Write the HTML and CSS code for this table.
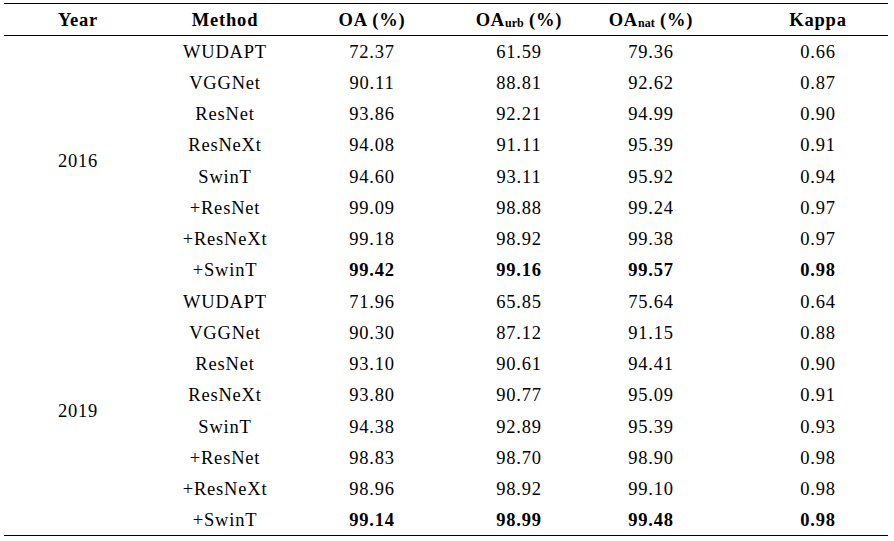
FILE: index.html
```html
<!DOCTYPE html>
<html>
<head>
<meta charset="utf-8">
<link rel="stylesheet" href="styles.css">
</head>
<body>
<table class="results">
  <colgroup>
    <col class="c-year"><col class="c-method"><col class="c-oa"><col class="c-urb"><col class="c-nat"><col class="c-kappa">
  </colgroup>
  <thead>
    <tr>
      <th>Year</th>
      <th>Method</th>
      <th>OA (%)</th>
      <th>OA<span class="sub">urb</span> (%)</th>
      <th>OA<span class="sub">nat</span> (%)</th>
      <th class="kappa">Kappa</th>
    </tr>
  </thead>
  <tbody>
    <tr><td rowspan="8">2016</td><td>WUDAPT</td><td>72.37</td><td>61.59</td><td>79.36</td><td class="kappa">0.66</td></tr>
    <tr><td>VGGNet</td><td>90.11</td><td>88.81</td><td>92.62</td><td class="kappa">0.87</td></tr>
    <tr><td>ResNet</td><td>93.86</td><td>92.21</td><td>94.99</td><td class="kappa">0.90</td></tr>
    <tr><td>ResNeXt</td><td>94.08</td><td>91.11</td><td>95.39</td><td class="kappa">0.91</td></tr>
    <tr><td>SwinT</td><td>94.60</td><td>93.11</td><td>95.92</td><td class="kappa">0.94</td></tr>
    <tr><td>+ResNet</td><td>99.09</td><td>98.88</td><td>99.24</td><td class="kappa">0.97</td></tr>
    <tr><td>+ResNeXt</td><td>99.18</td><td>98.92</td><td>99.38</td><td class="kappa">0.97</td></tr>
    <tr class="best"><td>+SwinT</td><td>99.42</td><td>99.16</td><td>99.57</td><td class="kappa">0.98</td></tr>
    <tr><td rowspan="8">2019</td><td>WUDAPT</td><td>71.96</td><td>65.85</td><td>75.64</td><td class="kappa">0.64</td></tr>
    <tr><td>VGGNet</td><td>90.30</td><td>87.12</td><td>91.15</td><td class="kappa">0.88</td></tr>
    <tr><td>ResNet</td><td>93.10</td><td>90.61</td><td>94.41</td><td class="kappa">0.90</td></tr>
    <tr><td>ResNeXt</td><td>93.80</td><td>90.77</td><td>95.09</td><td class="kappa">0.91</td></tr>
    <tr><td>SwinT</td><td>94.38</td><td>92.89</td><td>95.39</td><td class="kappa">0.93</td></tr>
    <tr><td>+ResNet</td><td>98.83</td><td>98.70</td><td>98.90</td><td class="kappa">0.98</td></tr>
    <tr><td>+ResNeXt</td><td>98.96</td><td>98.92</td><td>99.10</td><td class="kappa">0.98</td></tr>
    <tr class="best"><td>+SwinT</td><td>99.14</td><td>98.99</td><td>99.48</td><td class="kappa">0.98</td></tr>
  </tbody>
</table>
</body>
</html>
```
FILE: styles.css
```css
html, body {
  margin: 0;
  padding: 0;
  background: #ffffff;
}
body {
  padding: 3px 0 0 4px;
  font-family: "Liberation Serif", "Times New Roman", serif;
  color: #000000;
}
.results {
  width: 884px;
  border-collapse: collapse;
  table-layout: fixed;
  border-top: 1px solid #000;
  border-bottom: 1.5px solid #000;
  font-size: 18.5px;
  letter-spacing: 0.8px;
}
.c-year { width: 148px; }
.c-method { width: 146px; }
.c-oa { width: 148px; }
.c-urb { width: 146px; }
.c-nat { width: 118px; }
.c-kappa { width: 178px; }
.results th, .results td {
  padding: 1px 0 0 0;
  text-align: center;
  vertical-align: middle;
  line-height: 20px;
}
.results thead th {
  height: 30px;
  font-weight: bold;
  border-bottom: 1.5px solid #000;
}
.results tbody tr {
  height: 31.25px;
}
.results .kappa {
  padding-left: 38px;
}
.results .best td:not(:first-child) {
  font-weight: bold;
}
.sub {
  font-size: 12px;
  letter-spacing: 0;
  vertical-align: -1px;
  line-height: 0;
}
```
